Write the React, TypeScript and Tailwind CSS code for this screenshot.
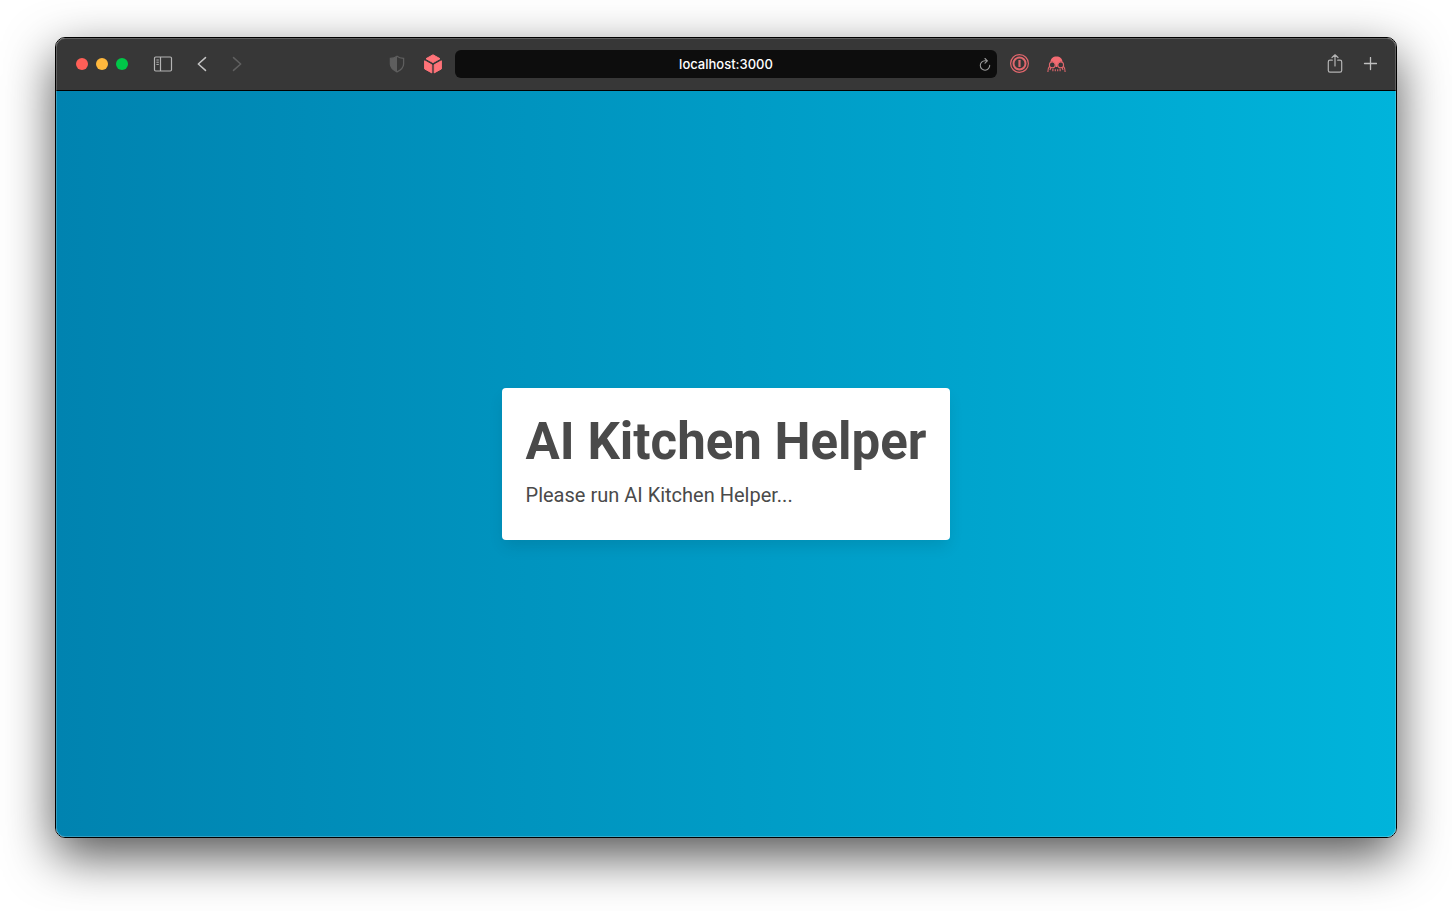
import React from "react";

const iconButton = "flex shrink-0 items-center justify-center";

function SidebarIcon() {
  return (
    <svg width="20" height="16" viewBox="0 0 20 16" fill="none" stroke="#b4b4b4" strokeWidth="1.2" aria-hidden="true">
      <rect x="1.5" y="1" width="17" height="14" rx="1.2" />
      <path d="M7.500 1v14" />
      <path d="M3.400 4h2.400M3.400 6.200h2.400M3.400 8.400h2.400" strokeWidth="1" />
    </svg>
  );
}

function ChevronIcon({ forward = false }: { forward?: boolean }) {
  return (
    <svg
      width="10"
      height="16"
      viewBox="0 0 10 16"
      fill="none"
      stroke={forward ? "#606060" : "#c4c4c4"}
      strokeWidth="1.5"
      strokeLinecap="round"
      strokeLinejoin="round"
      aria-hidden="true"
    >
      <path d={forward ? "M1.500 1.600 8.700 8 1.500 14.400" : "M8.500 1.600 1.300 8l7.200 6.400"} />
    </svg>
  );
}

function ShieldIcon() {
  return (
    <svg width="16" height="18" viewBox="0 0 16 18" fill="none" aria-hidden="true">
      <path
        d="M8 1.200C6.200 2.600 3.800 3.200 1.400 3.400V9c0 3.800 2.800 6 6.600 7.800C11.800 15 14.600 12.800 14.600 9V3.400C12.200 3.200 9.800 2.600 8 1.200Z"
        stroke="#5e5e5e"
        strokeWidth="1.300"
      />
      <path d="M8 1.200C6.200 2.600 3.800 3.200 1.400 3.400V9c0 3.800 2.800 6 6.600 7.800Z" fill="#5e5e5e" />
    </svg>
  );
}

function CubeIcon() {
  return (
    <svg width="20" height="20" viewBox="0 0 20 20" fill="#ff7379" aria-hidden="true">
      <g stroke="#ff7379" strokeWidth="1" strokeLinejoin="round">
        <path d="M10 .8 17 4.700 10 8.600 3 4.700Z" />
        <path d="M1.600 6.800 8.800 10.800V18.900L1.600 14.900Z" />
        <path d="M18.400 6.800 11.200 10.800V18.900L18.400 14.900Z" />
      </g>
    </svg>
  );
}

function ReloadIcon() {
  return (
    <svg width="12" height="14" viewBox="0 0 12 14" fill="none" stroke="#9a9a9a" strokeWidth="1.100" strokeLinecap="round" strokeLinejoin="round" aria-hidden="true">
      <path d="M10.700 8.300A4.700 4.700 0 1 1 6 3.800h2" />
      <path d="M6 1.500 8.300 3.800 6 6.100" />
    </svg>
  );
}

function KeyholeIcon() {
  return (
    <svg width="20" height="20" viewBox="0 0 20 20" fill="none" stroke="#e0666c" aria-hidden="true">
      <circle cx="9.500" cy="9.500" r="8.900" strokeWidth="1.200" />
      <circle cx="9.500" cy="9.500" r="6" strokeWidth="2" />
      <path d="M9.500 6v7" strokeWidth="2.200" />
    </svg>
  );
}

function SkullIcon() {
  return (
    <svg width="20" height="18" viewBox="0 0 20 18" fill="none" aria-hidden="true">
      <path d="M3.400 7.200C3.600 3.500 6.100 1.500 9.500 1.500S15.400 3.500 15.600 7.200L13.500 6.600 10.900 9.300 10.300 12H8.700L8.100 9.300 5.500 6.600Z" fill="#f36b72" />
      <g stroke="#e0666c" strokeWidth="1.100">
        <circle cx="5.300" cy="9.900" r="2.900" />
        <circle cx="13.700" cy="9.900" r="2.900" />
        <path d="M2.800 11C1.400 12.300 .9 14 .9 17M16.200 11c1.400 1.300 1.900 3 1.900 6M3.800 12.600l-.8 2.400M15.200 12.600l.8 2.400" />
        <path d="M5.900 13.800v2.400M8.300 14.200v2M10.700 14.200v2M13.100 13.800v2.400" />
      </g>
    </svg>
  );
}

function ShareIcon() {
  return (
    <svg width="16" height="20" viewBox="0 0 16 20" fill="none" stroke="#b4b4b4" strokeWidth="1.200" strokeLinecap="round" strokeLinejoin="round" aria-hidden="true">
      <path d="M5.300 6.200H3A1.700 1.700 0 0 0 1.300 7.900v8.600A1.700 1.700 0 0 0 3 18.200h10a1.700 1.700 0 0 0 1.700-1.700V7.900A1.700 1.700 0 0 0 13 6.200h-2.300" />
      <path d="M8 12V.8M5 3.500l3-2.700 3 2.700" />
    </svg>
  );
}

function PlusIcon() {
  return (
    <svg width="14" height="14" viewBox="0 0 14 14" fill="none" stroke="#c0c0c0" strokeWidth="1.300" strokeLinecap="round" aria-hidden="true">
      <path d="M7.500 .5v12M1.500 6.500h12" />
    </svg>
  );
}

function Toolbar() {
  return (
    <header className="flex h-[53px] items-center border-b border-black bg-[#373737]">
      <div className="flex flex-1 items-center justify-between pr-3 pl-5">
        <div className="flex items-center">
          <div className="flex gap-2">
            <button type="button" aria-label="Close" className="size-3 rounded-full bg-[#ff5f57]" />
            <button type="button" aria-label="Minimize" className="size-3 rounded-full bg-[#ffb83d]" />
            <button type="button" aria-label="Zoom" className="size-3 rounded-full bg-[#00c748]" />
          </div>
          <button type="button" aria-label="Show sidebar" className={`${iconButton} ml-[25px]`}>
            <SidebarIcon />
          </button>
          <nav className="ml-6 flex gap-[25px]">
            <button type="button" aria-label="Back" className={iconButton}>
              <ChevronIcon />
            </button>
            <button type="button" aria-label="Forward" disabled className={iconButton}>
              <ChevronIcon forward />
            </button>
          </nav>
        </div>
        <div className="flex items-center gap-[18px]">
          <button type="button" aria-label="Privacy report" className={iconButton}>
            <ShieldIcon />
          </button>
          <button type="button" aria-label="Cube extension" className={iconButton}>
            <CubeIcon />
          </button>
        </div>
      </div>

      <div className="flex h-7 w-[542px] items-center rounded-md bg-[#0d0d0d] px-1.5">
        <input
          type="text"
          aria-label="Address"
          defaultValue="localhost:3000"
          className="min-w-0 flex-1 bg-transparent pl-3 text-center text-[13px] leading-5 font-medium text-white outline-none"
        />
        <button type="button" aria-label="Reload" className={iconButton}>
          <ReloadIcon />
        </button>
      </div>

      <div className="flex flex-1 items-center justify-between pr-[19px] pl-[13px]">
        <div className="flex items-center gap-[17px]">
          <button type="button" aria-label="Password manager" className={iconButton}>
            <KeyholeIcon />
          </button>
          <button type="button" aria-label="Skull extension" className={iconButton}>
            <SkullIcon />
          </button>
        </div>
        <div className="flex items-center gap-5">
          <button type="button" aria-label="Share" className={iconButton}>
            <ShareIcon />
          </button>
          <button type="button" aria-label="New tab" className={iconButton}>
            <PlusIcon />
          </button>
        </div>
      </div>
    </header>
  );
}

export default function App() {
  return (
    <div className="flex min-h-screen flex-col bg-white px-[55px] pt-[37px] pb-[73px] font-['Inter',sans-serif]">
      <div className="relative flex flex-1 flex-col overflow-hidden rounded-[10px] border border-black shadow-[0_18px_50px_rgba(0,0,0,0.68)]">
        <Toolbar />
        <main className="flex flex-1 items-center justify-center bg-linear-to-r from-[#0083b0] to-[#00b4db] font-['Roboto',sans-serif]">
          <section className="rounded bg-white px-6 pt-6 pb-[30px] text-[#4a4a4a] shadow-[0_8px_16px_-2px_rgba(10,10,10,0.1)]">
            <h1 className="text-[51px] leading-[60px] font-bold">AI Kitchen Helper</h1>
            <p className="mt-2 text-[20px] leading-[30px]">Please run AI Kitchen Helper...</p>
          </section>
        </main>
        <div className="pointer-events-none absolute inset-0 rounded-[9px] shadow-[inset_0_0_0_1px_rgba(255,255,255,0.2)]" />
      </div>
    </div>
  );
}
